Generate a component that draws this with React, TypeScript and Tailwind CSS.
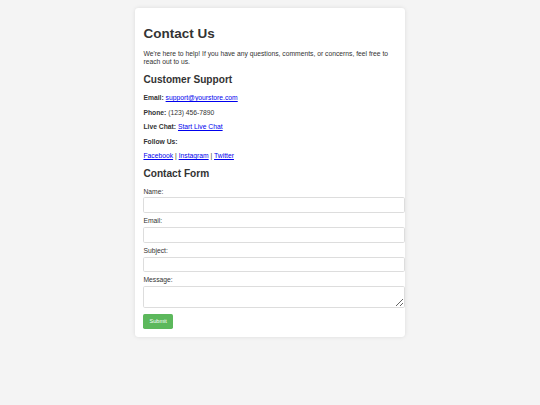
export default function App() {
  const fields = ["Name", "Email", "Subject"];
  return (
    <div className="min-h-screen bg-[#f4f4f4] p-[8.44px] font-['Liberation_Sans',Arial,sans-serif] text-[6.75px] leading-[1.15] text-[#333]">
      <div className="mx-auto w-[270px] rounded-[3.4px] bg-white p-[8.44px] shadow-[0_0_4px_rgba(0,0,0,0.1)]">
        <h1 className="mt-[9px] mb-[9px] text-[13.5px] font-bold leading-[1.15]">Contact Us</h1>
        <p className="my-[6.75px]">
          We're here to help! If you have any questions, comments, or concerns, feel free to reach out to us.
        </p>

        <h2 className="mt-[8.4px] mb-[8.4px] text-[10.125px] font-bold leading-[1.15]">Customer Support</h2>
        <p className="my-[6.75px]">
          <strong>Email:</strong>{" "}
          <a href="#" className="text-[#0000ee] underline">support@yourstore.com</a>
        </p>
        <p className="my-[6.75px]">
          <strong>Phone:</strong> (123) 456-7890
        </p>
        <p className="my-[6.75px]">
          <strong>Live Chat:</strong>{" "}
          <a href="#" className="text-[#0000ee] underline">Start Live Chat</a>
        </p>
        <p className="my-[6.75px]">
          <strong>Follow Us:</strong>
        </p>
        <p className="my-[6.75px]">
          <a href="#" className="text-[#0000ee] underline">Facebook</a> |{" "}
          <a href="#" className="text-[#0000ee] underline">Instagram</a> |{" "}
          <a href="#" className="text-[#0000ee] underline">Twitter</a>
        </p>

        <h2 className="mt-[8.4px] mb-[7.6px] text-[10.125px] font-bold leading-[1.15]">Contact Form</h2>
        <form className="flex flex-col">
          {fields.map((f) => (
            <div key={f} className="flex flex-col">
              <label className="mb-[2px] block">{f}:</label>
              <input
                type="text"
                className="mb-[4.2px] h-[15.6px] w-[262px] rounded-[1.7px] border border-[#ddd] bg-white"
              />
            </div>
          ))}
          <label className="mb-[2px] block">Message:</label>
          <textarea className="h-[22.3px] w-[262px] rounded-[1.7px] border border-[#ddd] bg-white" />
          <button
            type="button"
            className="mt-[6px] h-[14.7px] w-[29.5px] rounded-[1.7px] bg-[#5cb85c] text-[5.6px] text-white"
          >
            Submit
          </button>
        </form>
      </div>
    </div>
  );
}
